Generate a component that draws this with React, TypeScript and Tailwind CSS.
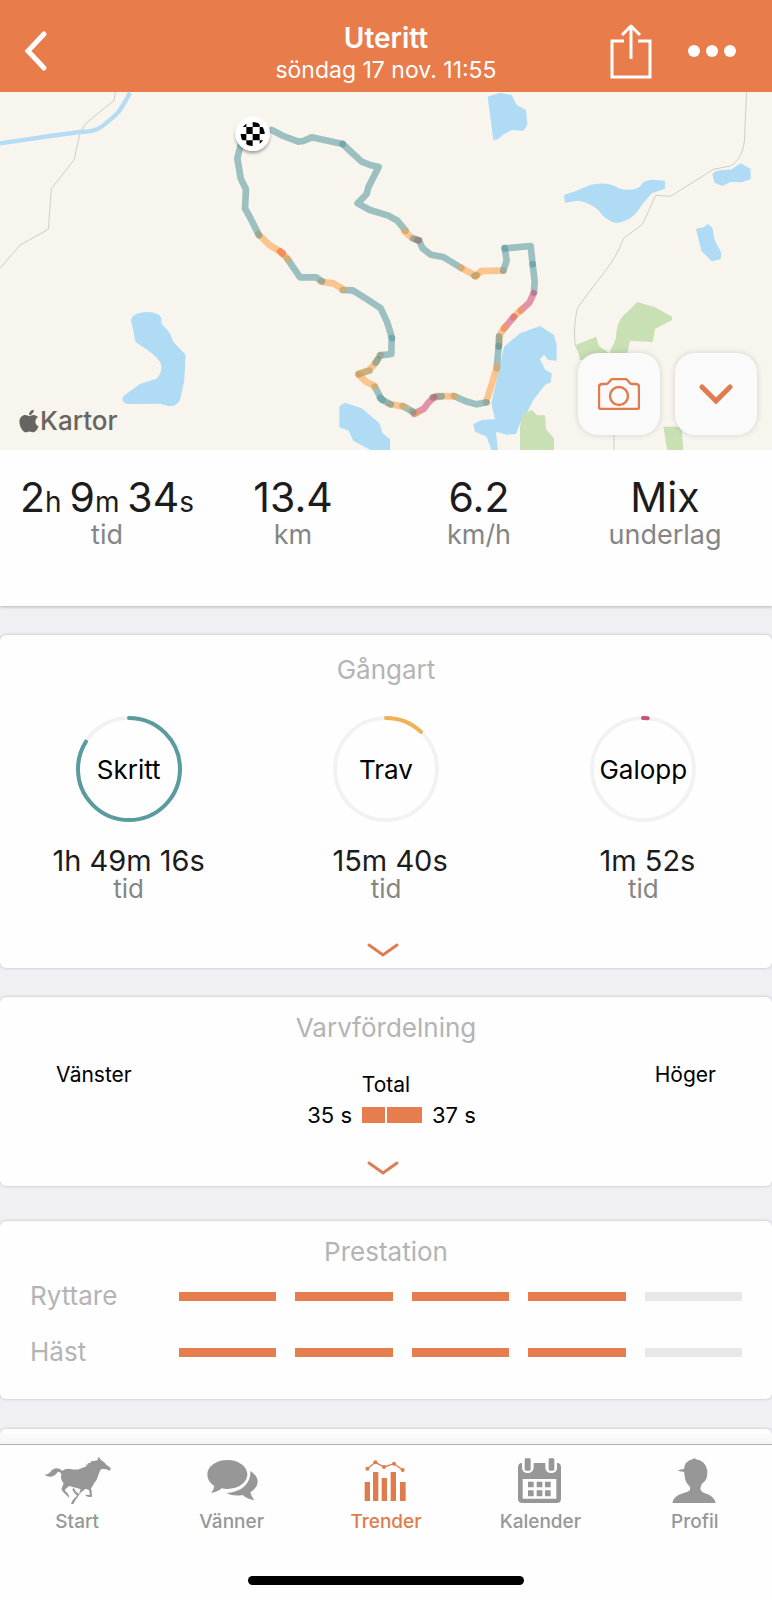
import type { ReactNode } from "react";
import { FaApple } from "react-icons/fa";
import clsx from "clsx";

type Gait = "walk" | "trot" | "canter";

const GAIT_COLORS: Record<Gait, string> = {
  walk: "#4f9299",
  trot: "#ff9d3c",
  canter: "#d2416e",
};

// Recorded track, one entry per stretch in the same gait
const ROUTE: { gait: Gait; points: string }[] = [
  { gait: "walk", points: "815,120 850,138 895,155 910,153 935,142 1028,162" },
  { gait: "walk", points: "1028,162 1060,192 1085,215 1110,225 1136,231 1105,292 1100,312 1073,340 1110,360 1165,377 1192,392 1217,422" },
  { gait: "trot", points: "1213,424 1235,443 1255,451" },
  { gait: "canter", points: "1252,450 1257,451" },
  { gait: "walk", points: "1240,446 1257,452 1268,475 1292,494 1330,501 1384,534" },
  { gait: "trot", points: "1382,533 1406,546 1428,558" },
  { gait: "walk", points: "1424,558 1430,555" },
  { gait: "trot", points: "1428,558 1444,543 1510,542" },
  { gait: "walk", points: "1510,542 1520,512 1514,474" },
  { gait: "walk", points: "1514,475 1592,468 1598,523" },
  { gait: "walk", points: "1598,523 1604,575 1602,607" },
  { gait: "canter", points: "1601,610 1588,638 1562,662" },
  { gait: "trot", points: "1563,660 1540,682" },
  { gait: "canter", points: "1542,680 1512,716" },
  { gait: "trot", points: "1515,710 1499,735 1497,768" },
  { gait: "walk", points: "1497,740 1496,770" },
  { gait: "walk", points: "1496,768 1490,835" },
  { gait: "trot", points: "1491,830 1476,880 1458,937" },
  { gait: "walk", points: "1460,937 1430,943 1395,933 1362,918" },
  { gait: "trot", points: "1364,919 1310,918" },
  { gait: "walk", points: "1325,919 1298,922" },
  { gait: "canter", points: "1302,922 1285,938 1272,956 1242,971" },
  { gait: "trot", points: "1248,970 1236,964" },
  { gait: "walk", points: "1240,966 1208,948" },
  { gait: "trot", points: "1212,950 1165,941" },
  { gait: "walk", points: "1172,943 1145,928 1124,890" },
  { gait: "walk", points: "1148,930 1140,924" },
  { gait: "trot", points: "1124,888 1098,875 1076,855" },
  { gait: "walk", points: "1076,852 1108,842" },
  { gait: "trot", points: "1076,852 1108,840 1132,812 1142,795" },
  { gait: "walk", points: "1127,818 1133,808" },
  { gait: "walk", points: "1140,796 1174,792 1175,744" },
  { gait: "walk", points: "1176,744 1162,698 1142,655 1100,627 1058,601 1028,600" },
  { gait: "trot", points: "1030,598 1000,580 963,575" },
  { gait: "walk", points: "966,574 948,562 900,562 862,506" },
  { gait: "trot", points: "864,508 842,485" },
  { gait: "canter", points: "840,484 848,491" },
  { gait: "trot", points: "848,490 806,463 775,432" },
  { gait: "walk", points: "777,436 752,386 735,355 738,298 722,265 712,205 722,165" },
];

function RideMap() {
  return (
    <svg
      viewBox="0 6 2316 1074"
      preserveAspectRatio="xMidYMid slice"
      className="block h-full w-full"
      role="img"
      aria-label="Karta"
    >
      <rect y="6" width="2316" height="1074" fill="#f7f5ed" />

      {/* Roads */}
      <g fill="none" stroke="#cfcdc6" strokeWidth="3">
        <path d="M347 0 342 32 300 65 255 103 240 130 222 210 154 296 145 418 60 465 0 535" />
        <path d="M2240 0 2233 155C2228 190 2215 215 2190 228L2140 238 2012 319 1967 316 1928 402 1870 446C1845 520 1790 570 1732 655 1722 700 1722 740 1726 765L1842 1010V1082" />
      </g>
      <path d="M0 160 150 138 240 126C290 125 300 118 350 72 365 58 375 35 390 8" fill="none" stroke="#b5dcf5" strokeWidth="13" />

      {/* Lakes */}
      <g fill="#b0dbf4">
        <path d="M393 690Q398 668 440 666 478 668 484 684L484 700 510 730 520 755 557 795 553 870 540 930Q530 950 505 948L480 941 380 942Q362 935 370 918L420 882 470 866Q490 845 482 820 470 795 407 757Z" />
        <path d="M1018 948 1035 938 1085 955 1138 1000 1148 1030 1170 1048V1082H1115L1060 1052 1046 1022 1018 1012Z" />
        <path d="M1463 20 1500 8 1535 15 1550 45 1578 60 1582 105 1570 122 1535 120 1508 135 1495 148 1480 150Z" />
        <path d="M1692 315 1730 302 1770 285Q1820 272 1860 296 1895 305 1920 290 1930 268 1960 269L1995 273V296L1955 310 1925 345Q1895 398 1845 398 1815 390 1795 360 1770 338 1735 332L1695 338Z" />
        <path d="M2137 252 2150 242 2195 238 2222 220 2252 237V268L2225 277 2190 276 2168 288 2143 278Z" />
        <path d="M2088 416 2110 412 2124 402 2137 413 2144 450 2164 488 2162 508 2135 514 2104 482Z" />
        <path d="M1512 770 1560 730 1620 708 1662 735 1670 765V812L1645 810 1632 794 1620 808 1636 840 1655 850 1653 876 1635 885 1600 930 1580 970 1560 1000 1548 1032 1520 1034 1488 1025 1490 1045 1494 1082H1475L1460 1040 1425 1025 1420 1002 1445 990 1485 988 1474 940 1490 870Z" />
      </g>

      {/* Woodland */}
      <g fill="#c8e0b4">
        <path d="M1728 765 1788 740 1797 768 1828 790 1848 745C1848 710 1860 680 1880 668L1912 636 1965 652 2016 680V690L1965 716 1958 756 1890 752 1880 800 1740 810Z" />
        <path d="M1560 1082V1010L1565 975 1595 960 1612 976H1635L1638 1018 1662 1045V1082Z" />
        <path d="M1990 1010H2045L2050 1082H2002Z" />
      </g>

      <g fill="none" strokeWidth="20" strokeLinecap="round" strokeLinejoin="round">
        {ROUTE.map((part) => (
          <polyline key={part.points} points={part.points} stroke={GAIT_COLORS[part.gait]} strokeOpacity="0.54" />
        ))}
      </g>

      {/* Start / finish marker */}
      <defs>
        <clipPath id="flag">
          <circle cx="758" cy="132" r="36" />
        </clipPath>
        <filter id="lift" x="-30%" y="-30%" width="160%" height="160%">
          <feDropShadow dx="0" dy="7" stdDeviation="5" floodOpacity="0.35" />
        </filter>
      </defs>
      <circle cx="758" cy="131" r="52" fill="#fff" filter="url(#lift)" />
      <path
        clipPath="url(#flag)"
        d="M718 94h21v17h-21ZM758 94h21v17h-21ZM739 111h19v21h-19ZM779 111h20v21h-20ZM718 132h21v19h-21ZM758 132h21v19h-21ZM739 151h19v20h-19ZM779 151h20v20h-20Z"
      />
    </svg>
  );
}

function MapButton({ label, children }: { label: string; children: ReactNode }) {
  return (
    <button
      type="button"
      aria-label={label}
      className="flex h-[82px] w-[82px] items-center justify-center rounded-[20px] bg-[#fafafa] text-[#e07b4c] shadow-[0_0_6px_rgba(0,0,0,0.15)]"
    >
      {children}
    </button>
  );
}

function ExpandButton({ label }: { label: string }) {
  return (
    <button type="button" aria-label={label} className="mr-1.5 block self-center text-[#dd7d51]">
      <svg viewBox="0 0 32 14" className="block h-[14px] w-8" fill="none" stroke="currentColor" strokeWidth="3" strokeLinecap="round">
        <path d="M2 2 16 12 30 2" />
      </svg>
    </button>
  );
}

function Card({ className, children }: { className?: string; children: ReactNode }) {
  return (
    <section className={clsx("flex flex-col rounded-md bg-[#fefefe] shadow-[0_0_3px_rgba(0,0,0,0.25)]", className)}>
      {children}
    </section>
  );
}

function CardTitle({ children }: { children: ReactNode }) {
  return <h2 className="text-center text-[26px] leading-8 text-[#b4b4b4]">{children}</h2>;
}

function Stat({ label, children }: { label: string; children: ReactNode }) {
  return (
    <div className="whitespace-nowrap text-center">
      <div className="text-[41px] leading-[48px] text-[#1c1c1c]">{children}</div>
      <div className="text-[27px] leading-7 text-[#858585]">{label}</div>
    </div>
  );
}

function Unit({ children }: { children: ReactNode }) {
  return <span className="text-[28px] leading-none whitespace-pre">{children}</span>;
}

const GAITS = [
  { name: "Skritt", time: "1h 49m 16s", share: 84, color: "#5a9ba0" },
  { name: "Trav", time: " 15m 40s", share: 12, color: "#efb355" },
  { name: "Galopp", time: " 1m 52s", share: 1.5, color: "#c9507a" },
];

function GaitRing({ name, share, color }: { name: string; share: number; color: string }) {
  return (
    <div className="relative h-[106px] w-[106px]">
      <svg viewBox="0 0 106 106" className="h-full w-full -rotate-90" fill="none" strokeWidth="4">
        <circle cx="53" cy="53" r="51" stroke="#f2f2f2" />
        <circle
          cx="53"
          cy="53"
          r="51"
          stroke={color}
          strokeLinecap="round"
          pathLength="100"
          strokeDasharray={`${share} 100`}
        />
      </svg>
      <span className="absolute inset-0 flex items-center justify-center text-[26px] text-black">{name}</span>
    </div>
  );
}

const RATINGS = [
  { label: "Ryttare", value: 4 },
  { label: "Häst", value: 4 },
];

function TabIcon({ viewBox, children }: { viewBox: string; children: ReactNode }) {
  return (
    <svg viewBox={viewBox} className="h-[50px] w-[68px]" fill="currentColor" aria-hidden="true">
      {children}
    </svg>
  );
}

const TABS = [
  {
    label: "Start",
    icon: (
      <TabIcon viewBox="22 24 204 150">
        <path d="M26 80Q36 81 44 72 52 61 63 61 72 61 79 68 88 62 100 62 118 66 130 64 140 60 147 57L155 53 148 51Q155 50 160 48L153 44Q162 46 168 42L164 38Q174 41 186 36L188 26 192 31 197 37Q206 42 213 51L225 60Q226 66 220 68L213 64Q204 62 197 63 191 68 188 82 184 98 174 108 171 116 166 121L168 130 169 146Q160 148 151 144L149 140 163 141 160 126 150 122 137 132 130 140 126 148 119 157 113 168H106Q108 158 115 152L124 143 114 132 110 124 114 119 121 131 130 138 135 124Q124 120 114 118 106 115 101 114L90 122 88 128 98 139 101 151 94 143 82 131 77 124 84 106Q73 95 77 79 73 69 66 72 59 84 46 86 36 87 26 80Z" />
      </TabIcon>
    ),
  },
  {
    label: "Vänner",
    icon: (
      <TabIcon viewBox="593 78 204 150">
        <path d="M681 90C715 90 741 109 741 133S715 177 681 177Q671 177 664 175 652 187 632 188 640 180 642 168 621 155 621 133C621 109 648 90 681 90Z" />
        <path d="M750 123Q772 136 772 156 771 174 750 187 752 199 762 210 742 208 727 195 700 200 678 189C719 186 752 164 750 123Z" />
      </TabIcon>
    ),
  },
  {
    label: "Trender",
    active: true,
    icon: (
      <TabIcon viewBox="36 78 204 150">
        <path d="M74 156h16v57H74ZM99 126h16v87H99ZM125 144h16v69h-16ZM152 126h16v87h-16ZM180 156h17v57h-17Z" />
        <path d="M82 116 106 97 132 111 162 101 188 120" fill="none" stroke="currentColor" strokeWidth="4" />
        <circle cx="82" cy="116" r="6" />
        <circle cx="106" cy="97" r="6" />
        <circle cx="132" cy="111" r="6" />
        <circle cx="162" cy="101" r="6" />
        <circle cx="188" cy="120" r="6" />
      </TabIcon>
    ),
  },
  {
    label: "Kalender",
    icon: (
      <TabIcon viewBox="499 78 204 150">
        <path
          fillRule="evenodd"
          d="M545 99H547V115Q549 129 564 129T582 115V99H617V115Q619 129 635 129T652 115V99H655Q664 102 664 110V206Q664 219 651 219H549Q535 219 535 206V110Q536 101 545 99ZM549 147V206H650V147Z"
        />
        <path d="M555 89q0-4 4-4h10q4 0 4 4v29q0 4-4 4h-10q-4 0-4-4ZM627 89q0-4 4-4h9q4 0 4 4v29q0 4-4 4h-9q-4 0-4-4Z" />
        <path d="M565 155h17v17h-17ZM591 155h17v17h-17ZM616 155h17v17h-17ZM565 181h17v18h-17ZM591 181h17v18h-17ZM616 181h17v18h-17Z" />
      </TabIcon>
    ),
  },
  {
    label: "Profil",
    icon: (
      <TabIcon viewBox="962 78 204 150">
        <path d="M1012 122Q1020 117 1031 117 1033 93 1057 88 1062 82 1067 88 1096 93 1101 122 1102 148 1091 156 1086 158 1084 163L1080 175Q1081 186 1094 190 1121 198 1126 219H996Q1000 198 1028 190 1044 186 1049 180V170Q1034 158 1033 138L1031 125Q1022 125 1012 122Z" />
      </TabIcon>
    ),
  },
];

export default function App() {
  return (
    <div className="min-h-screen bg-[#f0f0f4] font-['Inter',sans-serif]">
      <header className="grid grid-cols-[1fr_auto_1fr] items-center bg-[#e97c4b] px-6 pt-2.5 text-white">
        <button type="button" aria-label="Tillbaka" className="justify-self-start">
          <svg viewBox="0 0 24 42" className="h-[42px] w-6" fill="none" stroke="currentColor" strokeWidth="5" strokeLinecap="round">
            <path d="M20 4 4 21 20 38" />
          </svg>
        </button>
        <div className="pt-3 pb-1.5 text-center">
          <h1 className="text-[28px] leading-8 font-semibold">Uteritt</h1>
          <p className="text-[23px] leading-8">söndag 17 nov. 11:55</p>
        </div>
        <div className="flex items-center gap-9 justify-self-end pr-3">
          <button type="button" aria-label="Dela">
            <svg viewBox="0 0 42 56" className="h-14 w-[42px]" fill="none" stroke="currentColor" strokeWidth="3">
              <path d="M14 18H2V54H40V18H28" />
              <path d="M21 36V3M12 12 21 3 30 12" strokeLinejoin="round" />
            </svg>
          </button>
          <button type="button" aria-label="Mer">
            <svg viewBox="0 0 48 12" className="h-3 w-12" fill="currentColor">
              <circle cx="6" cy="6" r="6" />
              <circle cx="24" cy="6" r="6" />
              <circle cx="42" cy="6" r="6" />
            </svg>
          </button>
        </div>
      </header>

      <div className="relative h-[358px]">
        <RideMap />
        <div className="absolute bottom-[13px] left-[18px] flex items-center text-[#68645f]">
          <FaApple className="h-[26px] w-[22px]" />
          <span className="text-[26px] leading-8 font-medium">Kartor</span>
        </div>
        <div className="absolute right-[15px] bottom-[15px] flex gap-[15px]">
          <MapButton label="Visa bilder">
            <svg viewBox="0 0 42 32" className="h-8 w-[42px]" fill="none" stroke="currentColor" strokeWidth="2.4">
              <path d="M4 6H8Q10 6 11 4L12 3Q13 1 15 1H27Q29 1 30 3L31 4Q32 6 34 6H38Q41 6 41 9V29Q41 31 39 31H3Q1 31 1 29V9Q1 6 4 6Z" />
              <circle cx="21" cy="18" r="9" />
            </svg>
          </MapButton>
          <MapButton label="Fäll ut kartan">
            <svg viewBox="0 0 34 20" className="h-5 w-[34px]" fill="none" stroke="currentColor" strokeWidth="5" strokeLinecap="round">
              <path d="M3 3 17 17 31 3" />
            </svg>
          </MapButton>
        </div>
      </div>

      <section className="grid grid-cols-4 bg-[#fefefe] px-3.5 pt-[23px] pb-[57px] shadow-[0_1px_3px_rgba(0,0,0,0.25)]">
        <Stat label="tid">
          2<Unit>{"h "}</Unit>9<Unit>{"m "}</Unit>34<Unit>s</Unit>
        </Stat>
        <Stat label="km">13.4</Stat>
        <Stat label="km/h">6.2</Stat>
        <Stat label="underlag">Mix</Stat>
      </section>

      <Card className="mt-[29px] pt-[19px] pb-[11px]">
        <CardTitle>Gångart</CardTitle>
        <div className="mt-[30px] grid grid-cols-3">
          {GAITS.map((gait) => (
            <div key={gait.name} className="flex flex-col items-center">
              <GaitRing name={gait.name} share={gait.share} color={gait.color} />
              <div className="mt-[25px] text-[29px] leading-7 whitespace-pre text-[#1c1c1c]">{gait.time}</div>
              <div className="text-[26px] leading-7 text-[#858585]">tid</div>
            </div>
          ))}
        </div>
        <div className="mt-10 flex justify-center">
          <ExpandButton label="Visa mer om gångart" />
        </div>
      </Card>

      <Card className="mt-[29px] pt-[15px] pb-[11px]">
        <CardTitle>Varvfördelning</CardTitle>
        <div className="mt-[17px] grid grid-cols-[1fr_2fr_1fr] text-[21px] leading-7 text-black">
          <div className="pl-14">Vänster</div>
          <div className="pt-2.5">
            <div className="text-center">Total</div>
            <div className="mt-0.5 grid grid-cols-2 gap-0.5 text-[22px]">
              <div className="flex items-center justify-end gap-2.5">
                35 s
                <span className="h-4 w-[23px] bg-[#e67d4e]" />
              </div>
              <div className="flex items-center gap-2.5">
                <span className="h-4 w-[35px] bg-[#e67d4e]" />
                37 s
              </div>
            </div>
          </div>
          <div className="pr-14 text-right">Höger</div>
        </div>
        <div className="mt-8 flex justify-center">
          <ExpandButton label="Visa alla varv" />
        </div>
      </Card>

      <Card className="mt-[35px] px-[30px] pt-[15px] pb-[31px]">
        <CardTitle>Prestation</CardTitle>
        <div className="mt-3 flex flex-col gap-6">
          {RATINGS.map((rating) => (
            <div key={rating.label} className="flex items-center">
              <span className="w-[149px] text-[26px] leading-8 text-[#b4b4b4]">{rating.label}</span>
              <div className="grid flex-1 grid-cols-5 gap-[19px]" role="img" aria-label={`${rating.value} av 5`}>
                {[1, 2, 3, 4, 5].map((step) => (
                  <span key={step} className={clsx("h-[9px]", step <= rating.value ? "bg-[#e67d4e]" : "bg-[#e8e8e8]")} />
                ))}
              </div>
            </div>
          ))}
        </div>
      </Card>

      {/* Top edge of the next card, tucked in behind the tab bar */}
      <div className="mt-[30px] h-[15px] rounded-t-md bg-linear-to-b from-white to-[#f4f4f4] shadow-[0_0_3px_rgba(0,0,0,0.25)]" />

      <nav className="relative border-t border-[#b2b2b2] bg-[#fefefe] pt-[11px] pb-[15px]">
        <div className="grid grid-cols-5">
          {TABS.map((tab) => (
            <a
              key={tab.label}
              href="#"
              className={clsx(
                "flex flex-col items-center gap-1 text-[19px] leading-6 font-medium",
                tab.active ? "text-[#e07b4e]" : "text-[#979797]"
              )}
            >
              {tab.icon}
              {tab.label}
            </a>
          ))}
        </div>
        <div className="mx-auto mt-[42px] h-[9px] w-[276px] rounded-full bg-black" />
      </nav>
    </div>
  );
}
